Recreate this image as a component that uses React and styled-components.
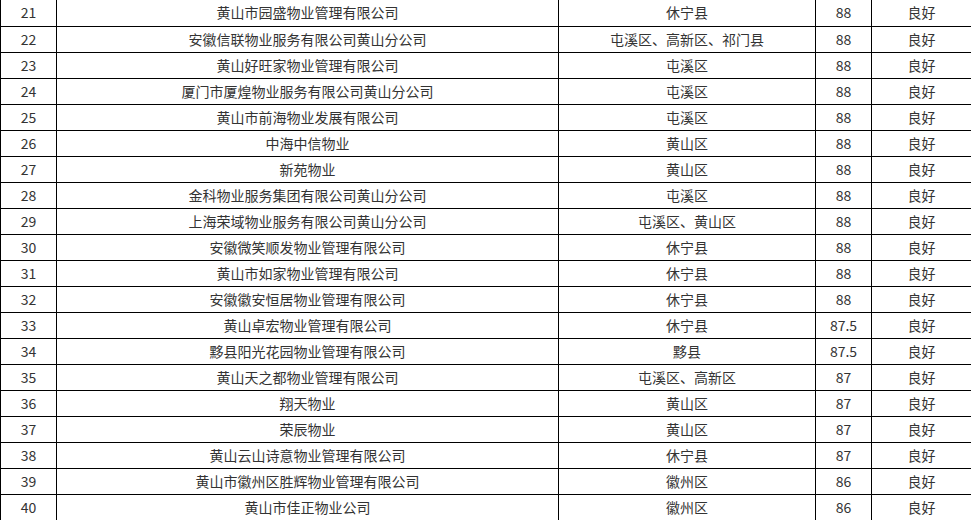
import React from "react";
import styled, { createGlobalStyle } from "styled-components";

const Global = createGlobalStyle`
  html, body { margin: 0; padding: 0; background: #fff; overflow: hidden; }
  body { font-family: "Noto Sans CJK SC", "Microsoft YaHei", sans-serif; }
`;

const Table = styled.table`
  width: 971px;
  border-collapse: collapse;
  table-layout: fixed;
  font-size: 14px;
  color: #333;
`;

const Col = styled.col`
  width: ${(p) => p.$w}px;
`;

const Row = styled.tr`
  height: 26px;
  &:first-child td { border-top: none; height: 25px; }
`;

const Cell = styled.td`
  border: 1px solid #000;
  text-align: center;
  padding: 0;
  height: 25px;
  line-height: 25px;
  white-space: nowrap;
  overflow: hidden;
`;

const widths = [56, 502, 257, 56, 100];

const data = [
  [21, "黄山市园盛物业管理有限公司", "休宁县", "88"],
  [22, "安徽信联物业服务有限公司黄山分公司", "屯溪区、高新区、祁门县", "88"],
  [23, "黄山好旺家物业管理有限公司", "屯溪区", "88"],
  [24, "厦门市厦煌物业服务有限公司黄山分公司", "屯溪区", "88"],
  [25, "黄山市前海物业发展有限公司", "屯溪区", "88"],
  [26, "中海中信物业", "黄山区", "88"],
  [27, "新苑物业", "黄山区", "88"],
  [28, "金科物业服务集团有限公司黄山分公司", "屯溪区", "88"],
  [29, "上海荣域物业服务有限公司黄山分公司", "屯溪区、黄山区", "88"],
  [30, "安徽微笑顺发物业管理有限公司", "休宁县", "88"],
  [31, "黄山市如家物业管理有限公司", "休宁县", "88"],
  [32, "安徽徽安恒居物业管理有限公司", "休宁县", "88"],
  [33, "黄山卓宏物业管理有限公司", "休宁县", "87.5"],
  [34, "黟县阳光花园物业管理有限公司", "黟县", "87.5"],
  [35, "黄山天之都物业管理有限公司", "屯溪区、高新区", "87"],
  [36, "翔天物业", "黄山区", "87"],
  [37, "荣辰物业", "黄山区", "87"],
  [38, "黄山云山诗意物业管理有限公司", "休宁县", "87"],
  [39, "黄山市徽州区胜辉物业管理有限公司", "徽州区", "86"],
  [40, "黄山市佳正物业公司", "徽州区", "86"],
];

export default function App() {
  return (
    <>
      <Global />
      <Table>
        <colgroup>
          {widths.map((w, i) => (
            <Col key={i} $w={w} />
          ))}
        </colgroup>
        <tbody>
          {data.map(([n, name, area, score]) => (
            <Row key={n}>
              <Cell>{n}</Cell>
              <Cell>{name}</Cell>
              <Cell>{area}</Cell>
              <Cell>{score}</Cell>
              <Cell>良好</Cell>
            </Row>
          ))}
        </tbody>
      </Table>
    </>
  );
}
